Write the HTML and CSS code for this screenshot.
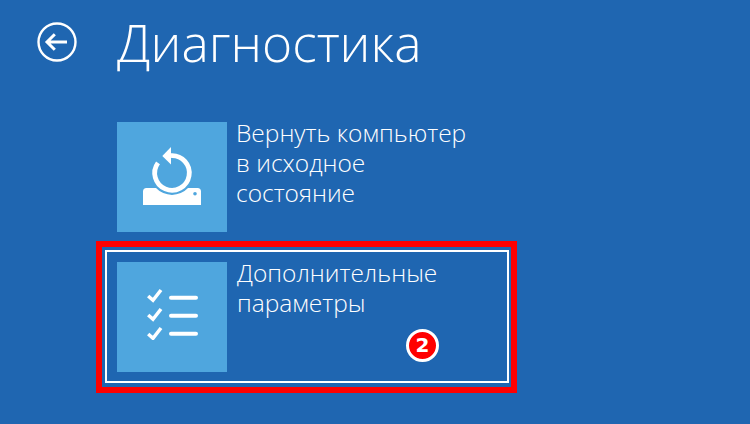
FILE: index.html
```html
<!DOCTYPE html>
<html lang="ru">
<head>
<meta charset="utf-8">
<title>Диагностика</title>
<link rel="stylesheet" href="styles.css">
</head>
<body>
<header class="header">
  <svg class="back" width="40" height="40" viewBox="0 0 40 40" aria-hidden="true">
    <circle cx="20" cy="20" r="18.500" fill="none" stroke="#fff" stroke-width="2.400"/>
    <path d="M30 20H10M17.800 12.200L10 20l7.800 7.800" fill="none" stroke="#fff" stroke-width="3"/>
  </svg>
  <h1 class="title">Диагностика</h1>
</header>
<main class="options">
  <div class="plain">
    <div class="option">
      <div class="tile">
        <svg class="icon-restore" width="58" height="58" viewBox="0 0 58 58" aria-hidden="true">
          <path d="M0 44.500Q0 41 3.500 41H13A22 22 0 0 0 45 41H54.500Q58 41 58 44.500V58H0Z" fill="#fff"/>
          <circle cx="52" cy="46.700" r="1.800" fill="#4fa6de"/>
          <path d="M15 15.800A17.300 17.300 0 1 0 28 8.700" fill="none" stroke="#fff" stroke-width="4.800"/>
          <path d="M28 0V17.500L19.300 9Z" fill="#fff"/>
        </svg>
      </div>
      <div class="label">Вернуть компьютер<br>в исходное<br>состояние</div>
    </div>
  </div>
  <div class="mark">
    <div class="focus">
      <div class="option">
        <div class="tile">
          <svg class="icon-list" width="51" height="52" viewBox="0 0 51 52" aria-hidden="true">
            <path d="M1.200 8L6 12.300 14 2M1.200 27L6 31.300 14 21M1.200 46L6 50.300 14 40" fill="none" stroke="#fff" stroke-width="3.500"/>
            <path d="M24 9.700H49M24 27.700H49M24 45.700H49" fill="none" stroke="#fff" stroke-width="4" stroke-linecap="round"/>
          </svg>
        </div>
        <div class="label label-second">Дополнительные<br>параметры</div>
      </div>
      <span class="badge">2</span>
    </div>
  </div>
</main>
</body>
</html>
```

FILE: styles.css
```css
* { box-sizing: border-box; }
html, body { margin: 0; height: 424px; overflow: hidden; }
body {
  background: #1f66b1;
  color: #fff;
  font-family: "Open Sans", "Noto Sans", sans-serif;
  font-weight: 300;
}
.header {
  display: flex;
  align-items: center;
  height: 84px;
  padding-left: 37px;
}
.back { flex: none; margin-right: 40px; }
.title {
  margin: 0;
  font-size: 51.500px;
  line-height: 84px;
  font-weight: 300;
}
.options { padding: 38px 0 0 96px; }
.plain { padding-left: 21px; height: 119px; }
.option { display: flex; }
.tile {
  flex: none;
  width: 110px;
  height: 110px;
  background: #4fa6de;
  display: flex;
  align-items: center;
  justify-content: center;
}
.icon-restore { margin-bottom: 2px; }
.icon-list { margin-bottom: 6px; }
.label {
  margin: -4px 0 0 9px;
  font-size: 24.500px;
  line-height: 30px;
}
.label-second { margin-left: 10px; }
.mark {
  width: 421px;
  height: 152px;
  border: 6px solid #f00;
  padding: 3px 2px 4px 3px;
}
.focus {
  position: relative;
  height: 133px;
  border: 2px solid #fff;
  padding: 10px;
}
.badge {
  position: absolute;
  left: 299px;
  top: 77px;
  width: 33px;
  height: 33px;
  border-radius: 50%;
  background: #f00;
  border: 3px solid #fff;
  font: 700 20px/27px "DejaVu Sans", sans-serif;
  text-align: center;
}
```
